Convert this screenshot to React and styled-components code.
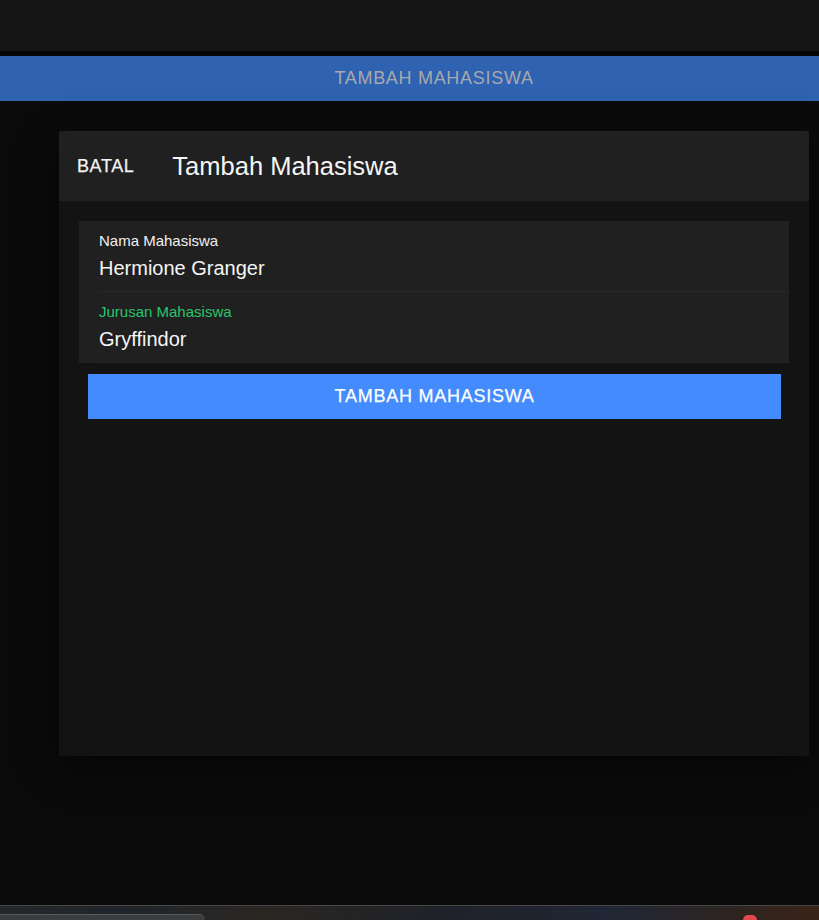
import styled, { createGlobalStyle } from "styled-components";

const GlobalStyle = createGlobalStyle`
  html, body {
    margin: 0;
    padding: 0;
    background: #0b0b0b;
    font-family: "Liberation Sans", Arial, sans-serif;
  }
  #root {
    min-height: 100vh;
    display: flex;
    flex-direction: column;
  }
`;

const TopBar = styled.div`
  height: 51px;
  background: #151515;
  border-bottom: 5px solid #060606;
  flex-shrink: 0;
`;

const AppBar = styled.div`
  height: 45px;
  padding: 0 10px 0 59px;
  background: #2f62b0;
  display: flex;
  align-items: center;
  justify-content: center;
  color: #a7a9ad;
  font-size: 18px;
  letter-spacing: 0.7px;
  text-transform: uppercase;
  flex-shrink: 0;
`;

const Main = styled.main`
  flex: 1;
  padding: 30px 10px 0 59px;
  background: #0b0b0b;
`;

const Card = styled.section`
  height: 625px;
  background: #131313;
  box-shadow: 0 12px 36px rgba(0, 0, 0, 0.55);
  display: flex;
  flex-direction: column;
`;

const CardHeader = styled.header`
  height: 70px;
  background: #202020;
  display: flex;
  align-items: center;
  padding-left: 18px;
  gap: 38px;
  border-radius: 2px 2px 0 0;
`;

const CancelButton = styled.button`
  border: 0;
  background: transparent;
  padding: 0;
  color: #f2f2f2;
  font-family: inherit;
  font-size: 18px;
  letter-spacing: 0.6px;
  -webkit-text-stroke: 0.25px #f2f2f2;
  text-transform: uppercase;
  cursor: pointer;
`;

const Title = styled.h1`
  margin: 0;
  font-size: 25.5px;
  font-weight: normal;
  color: #f5f5f5;
`;

const CardBody = styled.div`
  padding: 20px;
`;

const FormPanel = styled.div`
  background: #202020;
`;

const Field = styled.label`
  display: flex;
  flex-direction: column;
  margin-left: 20px;
  padding: 11px 0;
  gap: 6px;
  border-bottom: 1px solid ${(p) => (p.$last ? "#242424" : "#282828")};
`;

const FieldLabel = styled.span`
  font-size: 15px;
  line-height: 18px;
  color: ${(p) => (p.$active ? "#2bc46c" : "#f0f0f0")};
`;

const FieldValue = styled.input`
  border: 0;
  padding: 0;
  background: transparent;
  color: #f5f5f5;
  font-family: inherit;
  font-size: 20px;
  line-height: 24px;
  height: 24px;
  outline: none;
`;

const SubmitButton = styled.button`
  display: flex;
  align-items: center;
  justify-content: center;
  width: calc(100% - 17px);
  height: 45px;
  margin: 11px 8px 0 9px;
  border: 0;
  background: #438bff;
  color: #ffffff;
  font-family: inherit;
  font-size: 18px;
  letter-spacing: 0.75px;
  -webkit-text-stroke: 0.25px #ffffff;
  text-transform: uppercase;
  cursor: pointer;
`;

const Taskbar = styled.footer`
  height: 14px;
  border-top: 1px solid #474747;
  background: linear-gradient(
    90deg,
    #24272a 0%,
    #1f252b 15%,
    #2a2622 32%,
    #1f2229 55%,
    #202634 75%,
    #2e2420 90%,
    #3a2419 100%
  );
  display: flex;
  align-items: flex-end;
  flex-shrink: 0;
`;

const TaskTab = styled.div`
  width: 205px;
  height: 5px;
  background: #3b3c3e;
  border-top: 1px solid #5a5a5a;
  border-radius: 0 8px 0 0;
`;

const Notice = styled.div`
  width: 14px;
  height: 5px;
  margin-left: 538px;
  background: #e4474b;
  border-radius: 7px 7px 0 0;
`;

export default function App() {
  return (
    <>
      <GlobalStyle />
      <TopBar />
      <AppBar>Tambah Mahasiswa</AppBar>
      <Main>
        <Card>
          <CardHeader>
            <CancelButton type="button">Batal</CancelButton>
            <Title>Tambah Mahasiswa</Title>
          </CardHeader>
          <CardBody>
            <FormPanel>
              <Field>
                <FieldLabel>Nama Mahasiswa</FieldLabel>
                <FieldValue defaultValue="Hermione Granger" />
              </Field>
              <Field $last>
                <FieldLabel $active>Jurusan Mahasiswa</FieldLabel>
                <FieldValue defaultValue="Gryffindor" />
              </Field>
            </FormPanel>
            <SubmitButton type="button">Tambah Mahasiswa</SubmitButton>
          </CardBody>
        </Card>
      </Main>
      <Taskbar>
        <TaskTab />
        <Notice />
      </Taskbar>
    </>
  );
}
